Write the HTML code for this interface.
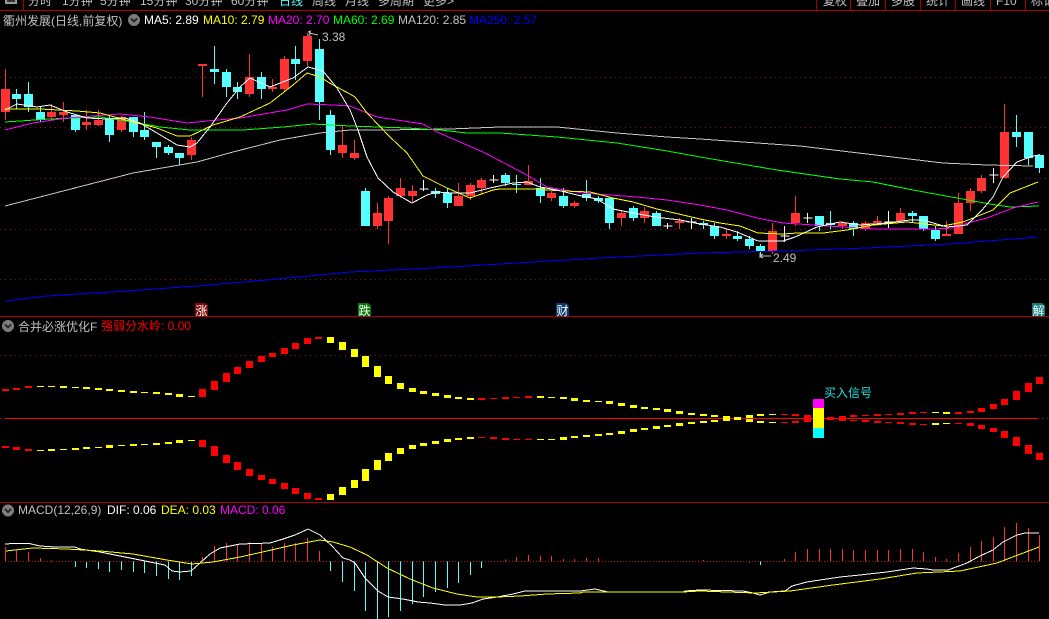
<!DOCTYPE html>
<html><head><meta charset="utf-8"><style>
html,body{margin:0;padding:0;background:#000;width:1049px;height:619px;overflow:hidden}
svg{display:block}
text{font-family:"Liberation Sans","WenQuanYi Zen Hei","Noto Sans CJK SC",sans-serif;font-size:12px;fill:#c0c0c0}
.l{fill:none;stroke-width:1}
</style></head><body>
<svg width="1049" height="619" viewBox="0 0 1049 619" shape-rendering="crispEdges">
<rect width="1049" height="619" fill="#000"/>
<!-- toolbar -->
<g>
<text x="28" y="5">分时</text><text x="62" y="5">1分钟</text><text x="100" y="5">5分钟</text><text x="140" y="5">15分钟</text><text x="185" y="5">30分钟</text><text x="231" y="5">60分钟</text><text x="279" y="5" style="fill:#55ffff">日线</text><text x="312" y="5">周线</text><text x="345" y="5">月线</text><text x="378" y="5">多周期</text><text x="423" y="5">更多&gt;</text>
<text x="823" y="5">复权</text><text x="856" y="5">叠加</text><text x="891" y="5">多股</text><text x="926" y="5">统计</text><text x="961" y="5">画线</text><text x="996" y="5">F10</text><text x="1031" y="5">标记</text>
</g>
<rect x="5" y="0" width="12" height="4" fill="#9a9a9a"/><rect x="7" y="0" width="8" height="2" fill="#333"/>
<path d="M23.5 0V10M816.5 0V10M850.5 0V10M885.5 0V10M920.5 0V10M955.5 0V10M990.5 0V10M1025.5 0V10" stroke="#a00000" fill="none"/>
<rect x="0" y="10" width="1049" height="1" fill="#b00000"/>
<rect x="0" y="316" width="1049" height="1" fill="#b00000"/>
<rect x="0" y="502" width="1049" height="1" fill="#b00000"/>
<!-- grid -->
<path d="M0 77.5H1049M0 127.5H1049M0 178.5H1049M0 229.5H1049M0 279.5H1049M0 355.5H1049" stroke="#8c1414" stroke-dasharray="1 4" fill="none"/>
<!-- titles -->
<text x="3" y="25">衢州发展(日线,前复权)</text>
<circle cx="134" cy="20" r="6" fill="#7c7c7c"/><path d="M131 18.5l3 3 3-3" stroke="#222" fill="none" stroke-width="1.5"/>
<text x="144" y="24" style="fill:#fff">MA5: 2.89</text>
<text x="203" y="24" style="fill:#ff0">MA10: 2.79</text>
<text x="268" y="24" style="fill:#f0f">MA20: 2.70</text>
<text x="333" y="24" style="fill:#0f0">MA60: 2.69</text>
<text x="398" y="24" style="fill:#c0c0c0">MA120: 2.85</text>
<text x="469" y="24" style="fill:#00f">MA250: 2.57</text>
<!-- candles -->
<g transform="translate(.5 0)">
<path fill="none" stroke="#ff3333" stroke-width="1" d="M5 69V120M51 104V120M63 102V122M86 110V130M98 110V126M121 116V132M191 137V160M202 64V97M249 54V97M272 79V92M284 56V92M307 33V66M342 126V158M354 140V160M377 203V229M388 196V244M400 178V198M412 185V203M458 183V206M470 183V200M481 178V194M528 165V185M551 191V201M574 201V208M621 211V226M644 207V223M679 218V229M726 229V239M772 223V254M795 196V226M842 221V229M865 221V231M877 216V226M900 208V223M946 221V236M958 193V234M970 188V211M981 175V193M1004 104V178"/>
<path fill="none" stroke="#ff3333" stroke-width="9" d="M5 89V112M51 112V117M63 112V115M86 122V125M98 120V125M121 117V130M191 140V155M202 64V66M249 77V94M272 87V89M284 59V89M307 36V61M342 145V153M354 153V158M377 213V226M388 198V221M400 188V196M412 191V196M458 196V206M470 185V196M481 180V188M528 181V185M551 193V198M574 203V206M621 213V218M644 211V218M679 221V223M726 234V236M772 231V251M795 213V223M842 223V226M865 223V229M877 221V223M900 213V221M946 234V236M958 203V234M970 191V203M981 178V191M1004 132V178"/>
<path fill="none" stroke="#55ffff" stroke-width="1" d="M16 89V109M28 82V112M40 107V122M75 115V132M109 115V142M133 117V137M144 112V140M156 142V158M168 145V155M179 153V165M214 46V84M226 69V97M237 82V99M261 72V99M295 46V80M319 39V120M330 110V155M365 188V226M435 188V198M447 188V208M505 173V186M516 175V193M540 178V203M563 188V208M586 180V201M598 196V203M609 197V229M633 206V221M656 211V226M703 221V229M714 223V239M737 231V241M749 236V249M760 244V256M819 216V231M830 211V229M853 221V236M912 211V223M923 216V231M935 226V241M1016 115V147M1028 132V165M1039 154V173"/>
<path fill="none" stroke="#55ffff" stroke-width="9" d="M16 94V99M28 94V107M40 112V120M75 115V130M109 118V135M133 117V132M144 130V137M156 142V147M168 147V153M179 153V158M214 69V72M226 72V87M237 87V92M261 77V89M295 59V64M319 49V102M330 115V150M365 191V226M435 191V194M447 193V203M505 175V183M516 184V185M540 188V196M563 196V206M586 194V198M598 198V201M609 198V223M633 208V218M656 213V226M703 223V225M714 226V236M737 236V239M749 239V246M760 246V251M819 216V226M830 223V225M853 223V229M912 213V216M923 216V229M935 230V239M1016 132V137M1028 132V158M1039 155V168"/>
<path fill="none" stroke="#fff" stroke-width="1" d="M423 180V191M419 189H428M493 175V183M489 180H498M667 223V229M663 226H672M691 218V229M687 222H696M784 226V242M780 236H789M807 213V223M803 218H812M888 211V228M884 222H893M993 168V183M989 175H998"/>
</g>
<!-- MA lines -->
<polyline class="l" stroke="#0000ff" stroke-width="1.2" points="5,301 47,296 127,291 197,286 267,280 350,272 433,268 517,263 600,258 700,253 783,251 867,248 950,244 1038,237"/>
<polyline class="l" stroke="#c8c8c8" points="5,206 67,190 133,173 197,162 233,152 280,140 320,133 350,130 383,130 450,129 500,127 557,127 617,133 667,137 700,139 743,142 800,146 867,154 943,163 987,165 1033,166"/>
<polyline class="l" stroke="#00ff00" points="5,122 50,119 100,117 133,122 160,127 190,130 243,130 283,127 313,124 350,126 407,128 440,130 467,133 500,133 557,137 617,143 667,151 700,157 777,170 840,179 873,182 913,190 957,198 990,204 1010,207 1039,206"/>
<polyline class="l" stroke="#ff00ff" points="5,130 33,123 67,118 80,117 120,114 150,117 187,123 207,121 240,118 287,110 307,104 333,105 350,106 377,117 423,124 437,132 483,152 527,175 547,187 583,193 637,197 667,200 700,205 727,210 757,218 783,223 813,225 843,227 873,229 933,229 953,228 967,223 987,218 1013,208 1038,202"/>
<polyline class="l" stroke="#ffff00" points="5,109 40,109 77,111 100,113 133,122 157,128 177,136 190,136 213,125 240,117 270,103 293,85 307,73 320,77 333,85 350,94 355,97 367,113 390,137 407,153 423,176 447,188 470,198 493,190 500,189 533,189 563,191 590,192 613,198 633,202 657,209 683,215 700,219 720,223 740,226 758,233 783,234 797,233 823,233 847,230 873,225 907,222 943,226 963,222 993,210 1010,193 1038,182"/>
<polyline class="l" stroke="#ffffff" points="5,110 17,104 37,107 50,105 67,112 87,118 107,119 125,118 140,123 157,133 177,145 190,147 197,143 210,127 227,103 240,87 250,78 270,87 293,78 308,67 323,71 337,88 350,110 358,130 367,157 378,178 393,192 412,203 427,195 437,192 453,193 470,193 490,188 513,183 527,182 540,187 557,190 577,195 597,199 613,209 633,213 655,217 680,220 700,224 720,227 737,232 758,241 783,241 795,237 817,227 840,222 860,225 887,223 910,220 923,220 947,227 967,225 982,210 993,197 1003,177 1017,162 1033,156 1039,155"/>
<!-- annotations -->
<path d="M308 32l3-1M308 32h2v3h-2M309 33l9 2" stroke="#c0c0c0" fill="none"/>
<text x="322" y="41">3.38</text>
<path d="M760 253v5M760 256h11M760 256l3-2M760 256l3 2" stroke="#c0c0c0" fill="none"/>
<text x="773" y="262">2.49</text>
<!-- signs -->
<path d="M195 303h10l3 3v10h-13z" fill="#800a0a"/><text x="195.500" y="315" style="fill:#fff">涨</text>
<path d="M358 303h10l3 3v10h-13z" fill="#0a7a0a"/><text x="358.500" y="315" style="fill:#fff">跌</text>
<path d="M556 303h10l3 3v10h-13z" fill="#0a3a6e"/><text x="556.500" y="315" style="fill:#fff">财</text>
<path d="M1032 303h10l3 3v10h-13z" fill="#0a7a7a"/><text x="1032.500" y="315" style="fill:#fff">解</text>
<!-- panel 2 -->
<circle cx="8" cy="326" r="6" fill="#7c7c7c"/><path d="M5 324.500l3 3 3-3" stroke="#222" fill="none" stroke-width="1.5"/>
<text x="18" y="331">合并必涨优化F</text>
<text x="101" y="330" style="fill:#ff0000">强弱分水岭: 0.00</text>
<rect x="5" y="418" width="1032" height="1" fill="#ff0000"/>
<path d="M0 418.500H5M1037 418.500H1049" stroke="#ff0000" stroke-dasharray="1 4" fill="none"/>
<g transform="translate(.5 320) scale(1 .33333)" fill="none" stroke-width="7">
<path stroke="#ff0000" d="M5 207V213M16 204V210M28 198V204M202 207V231M214 183V210M226 159V186M237 141V162M249 123V144M261 108V126M272 99V111M284 84V102M295 69V87M307 54V72M318 51V57M481 234V240M493 234V237M505 231V237M516 231V234M528 228V234M784 282V285M795 282V288M807 285V306M830 291V300M842 288V303M853 285V291M865 285V288M877 282V288M888 282V285M900 279V285M912 276V282M923 276V279M958 276V282M970 273V279M981 264V276M993 252V267M1004 237V255M1016 213V240M1028 189V216M1039 171V192M5 378V384M16 381V390M28 387V393M202 360V381M214 378V408M226 405V429M237 426V450M249 447V468M261 465V480M272 477V492M284 489V507M295 504V522M307 519V537M318 534V540M481 351V354M493 351V357M505 354V360M516 357V360M528 357V360M784 306V309M795 303V309M853 300V303M865 300V306M877 303V309M888 306V309M900 306V312M912 309V315M923 312V315M958 309V312M970 309V318M981 315V327M993 324V336M1004 333V354M1016 351V378M1028 375V402M1039 399V420"/>
<path stroke="#ffff00" d="M40 198V201M51 198V201M63 198V204M75 201V204M86 201V207M98 204V210M109 207V213M121 210V216M133 213V219M144 216V219M156 216V222M168 219V225M179 222V231M191 228V231M330 51V69M342 66V90M354 87V111M365 108V141M377 138V171M388 168V192M400 189V207M412 204V216M423 213V222M435 219V228M447 225V234M458 231V237M470 234V240M540 228V234M551 231V234M563 231V237M574 234V243M586 240V246M598 243V246M609 243V252M621 249V258M633 255V264M644 261V267M656 264V270M667 267V276M679 273V282M691 279V285M703 282V288M714 285V291M726 288V303M737 291V300M749 285V294M760 282V288M772 282V285M40 390V393M51 387V393M63 387V390M75 384V390M86 381V387M98 381V384M109 375V384M121 375V378M133 372V378M144 372V375M156 369V375M168 366V372M179 360V369M191 360V363M330 522V540M342 501V525M354 480V504M365 447V483M377 420V450M388 399V423M400 384V402M412 375V387M423 369V378M435 363V372M447 357V366M458 354V360M470 351V357M540 357V360M551 357V360M563 351V360M574 348V354M586 345V351M598 342V348M609 339V345M621 333V342M633 327V336M644 324V330M656 318V327M667 315V321M679 309V318M691 306V312M703 303V309M714 300V306M749 297V306M760 303V309M772 306V309M935 276V279M946 276V282M935 309V315M946 309V312"/>
</g>
<rect x="813" y="399" width="11" height="9" fill="#ff00ff"/><rect x="813" y="408" width="11" height="20" fill="#ffff00"/><rect x="813" y="428" width="11" height="10" fill="#00ffff"/>
<text x="824" y="397" style="fill:#22e0e0">买入信号</text>
<!-- panel 3 -->
<circle cx="8" cy="510.500" r="6" fill="#7c7c7c"/><path d="M5 509l3 3 3-3" stroke="#222" fill="none" stroke-width="1.5"/>
<text x="18" y="514">MACD(12,26,9)</text>
<text x="107" y="514" style="fill:#fff">DIF: 0.06</text>
<text x="161" y="514" style="fill:#ff0">DEA: 0.03</text>
<text x="220" y="514" style="fill:#f0f">MACD: 0.06</text>
<g transform="translate(.5 500) scale(1 .33333)" fill="none" stroke-width="1">
<path stroke="#ff3333" d="M5 141V184M16 148V184M28 156V184M40 174V184M51 181V184M202 171V184M214 138V184M226 129V184M237 132V184M249 126V184M261 132V184M272 141V184M284 129V184M295 129V184M307 114V184M319 153V184M505 178V184M516 171V184M528 165V184M540 168V184M551 168V184M563 177V184M574 177V184M586 174V184M598 174V184M703 180V184M772 183V184M784 177V184M795 156V184M807 147V184M819 147V184M830 147V184M842 147V184M853 150V184M865 150V184M877 150V184M888 150V184M900 147V184M912 147V184M923 156V184M935 171V184M946 177V184M958 159V184M970 141V184M981 123V184M993 111V184M1004 81V184M1016 69V184M1028 84V184M1039 105V184"/>
<path stroke="#55ffff" d="M75 184V201M86 184V204M98 184V207M109 184V216M121 184V210M133 184V216M144 184V219M156 184V228M168 184V237M179 184V240M191 184V228M330 184V213M342 184V246M354 184V273M365 184V333M377 184V357M388 184V351M400 184V333M412 184V312M423 184V291M435 184V276M447 184V264M458 184V249M470 184V225M481 184V204M749 184V187M760 184V195"/>
</g>
<path d="M5 561.500H1040" stroke="#b01818" stroke-dasharray="1 2" fill="none"/>
<polyline class="l" stroke="#ffffff" points="5,544 10,543.700 30,543.700 40,546 55,547 75,547 80,549 100,552 120,556 140,560 150,562 165,565 172,571 180,572 191,571 200,563 210,554 220,548 240,544 270,543 280,540 295,535 308,529 320,535 332,546 343,558 350,560 355,563 365,578 378,591 388,597 403,599 418,602 430,603 445,605 460,605 472,603 483,599 497,597 513,594 525,591 547,591 558,591 580,591 595,589 608,592 638,592 650,592 683,592 685,591 700,590 743,591 753,593 760,595 770,592 785,591 792,586 807,582 820,580 840,577 860,575 887,572 913,568 927,569 933,570 948,570 967,563 980,556 993,550 1003,542 1017,535 1025,533 1039,533"/>
<polyline class="l" stroke="#ffff00" points="6,551 33,548 67,549 100,551 133,554 167,560 192,564 213,562 240,557 267,551 293,545 320,540 333,542 350,547 367,555 387,568 410,579 433,588 457,594 477,597 497,597 520,596 547,594 580,593 583,592 683,592 700,591 755,593 790,591 833,585 880,579 917,573 960,571 997,563 1039,547"/>
</svg>
</body></html>
